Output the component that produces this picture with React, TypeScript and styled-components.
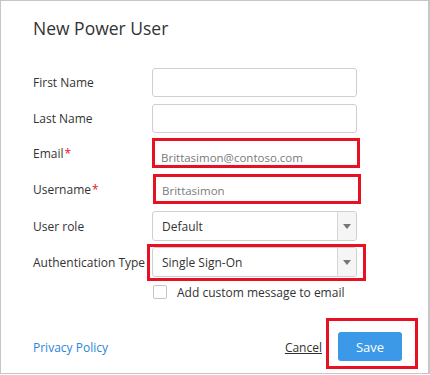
import React from 'react';
import styled, { createGlobalStyle } from 'styled-components';

const GlobalStyle = createGlobalStyle`
  html, body {
    margin: 0;
    padding: 0;
    background: #fff;
  }
  * {
    box-sizing: border-box;
  }
`;

const App: React.FC = () => {
  return (
    <>
      <GlobalStyle />
      <Frame>
        <Title>New Power User</Title>
        <Form>
          <Row $h={36}>
            <Label>First Name</Label>
            <TextInput />
          </Row>
          <Row $h={36}>
            <Label>Last Name</Label>
            <TextInput />
          </Row>
          <Row $h={34}>
            <Label>
              Email<Star>*</Star>
            </Label>
            <MarkedInput $dy={9}>Brittasimon@contoso.com</MarkedInput>
          </Row>
          <Row $h={38}>
            <Label>
              Username<Star>*</Star>
            </Label>
            <MarkedInput $dy={2} $shift={1}>Brittasimon</MarkedInput>
          </Row>
          <Row $h={36}>
            <Label>User role</Label>
            <Select>
              <SelectValue>Default</SelectValue>
              <SelectButton>
                <Arrow />
              </SelectButton>
            </Select>
          </Row>
          <Row $h={36}>
            <Label>Authentication Type</Label>
            <Select>
              <SelectValue>Single Sign-On</SelectValue>
              <SelectButton>
                <Arrow />
              </SelectButton>
              <Highlight $top={-4} $left={-6} $right={-10} $bottom={-5} />
            </Select>
          </Row>
          <Row $h={24}>
            <span />
            <CheckRow>
              <CheckBox />
              <CheckLabel>Add custom message to email</CheckLabel>
            </CheckRow>
          </Row>
        </Form>
        <Footer>
          <LinkText href="#">Privacy Policy</LinkText>
          <Actions>
            <Cancel href="#">Cancel</Cancel>
            <SaveButton>
              Save
              <Highlight $top={-14} $left={-12} $right={-16} $bottom={-8} />
            </SaveButton>
          </Actions>
        </Footer>
      </Frame>
    </>
  );
};

export default App;

const Frame = styled.div`
  width: 430px;
  height: 374px;
  border: 1px solid #c6c6c6;
  border-right-width: 2px;
  padding: 15px 26px 0 32px;
  font-family: 'Open Sans', 'Noto Sans', sans-serif;
  color: #333;
  display: flex;
  flex-direction: column;
`;

const Title = styled.h1`
  margin: 0;
  font-size: 17.5px;
  line-height: 24px;
  font-weight: 400;
  color: #333;
`;

const Form = styled.div`
  margin-top: 24px;
  display: flex;
  flex-direction: column;
`;

const Row = styled.div<{ $h: number }>`
  display: grid;
  grid-template-columns: 119px 205px;
  align-items: center;
  height: ${(p) => p.$h}px;
`;

const Label = styled.label`
  font-size: 12px;
  color: #333;
  white-space: nowrap;
`;

const Star = styled.span`
  color: #e81123;
  margin-left: 1px;
`;

const TextInput = styled.div`
  height: 29px;
  border: 1px solid #cfcfcf;
  border-radius: 3px;
  background: #fff;
`;

const MarkedInput = styled.div<{ $dy: number; $shift?: number }>`
  width: 208px;
  height: 30px;
  margin-left: ${(p) => p.$shift || 0}px;
  border: 3px solid #e81123;
  padding: ${(p) => p.$dy}px 0 0 6px;
  font-size: 11.5px;
  color: #7a7a7a;
  display: flex;
  align-items: center;
`;

const Select = styled.div`
  position: relative;
  height: 30px;
  border: 1px solid #cfcfcf;
  border-radius: 3px;
  display: flex;
  align-items: stretch;
`;

const SelectValue = styled.div`
  flex: 1;
  display: flex;
  align-items: center;
  padding-left: 9px;
  font-size: 12px;
  color: #333;
`;

const SelectButton = styled.div`
  width: 19px;
  border-left: 1px solid #d6d6d6;
  background: #f5f5f5;
  border-radius: 0 3px 3px 0;
  display: flex;
  align-items: center;
  justify-content: center;
`;

const Arrow = styled.span`
  width: 0;
  height: 0;
  border-left: 4px solid transparent;
  border-right: 4px solid transparent;
  border-top: 5px solid #777;
`;

const Highlight = styled.span<{ $top: number; $left: number; $right: number; $bottom: number }>`
  position: absolute;
  top: ${(p) => p.$top}px;
  left: ${(p) => p.$left}px;
  right: ${(p) => p.$right}px;
  bottom: ${(p) => p.$bottom}px;
  border: 3px solid #e81123;
  pointer-events: none;
`;

const CheckRow = styled.div`
  display: flex;
  align-items: center;
  gap: 10px;
  padding-left: 1px;
`;

const CheckBox = styled.span`
  width: 14px;
  height: 14px;
  border: 1px solid #c4c4c4;
  border-radius: 2px;
  background: #fff;
`;

const CheckLabel = styled.span`
  font-size: 12px;
  color: #333;
`;

const Footer = styled.div`
  margin-top: 28px;
  height: 29px;
  display: flex;
  align-items: center;
  justify-content: space-between;
`;

const LinkText = styled.a`
  font-size: 12px;
  color: #2a86d9;
  text-decoration: none;
  margin-top: 2px;
`;

const Actions = styled.div`
  display: flex;
  align-items: center;
  gap: 16px;
`;

const Cancel = styled.a`
  font-size: 12px;
  color: #333;
  text-decoration: underline;
  margin-top: 2px;
`;

const SaveButton = styled.button`
  position: relative;
  width: 64px;
  height: 29px;
  border: none;
  border-radius: 3px;
  background: #3b99e8;
  color: #fff;
  font-family: 'Open Sans', 'Noto Sans', sans-serif;
  font-size: 13px;
  padding: 0;
`;
